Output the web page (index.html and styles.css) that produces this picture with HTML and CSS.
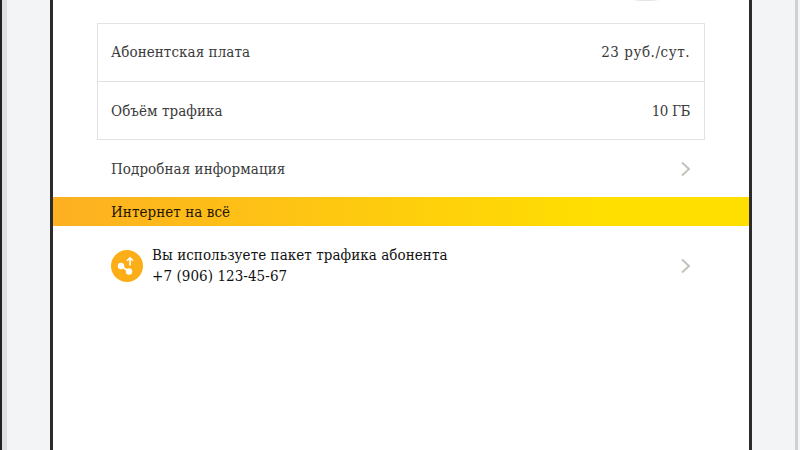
FILE: index.html
```html
<!DOCTYPE html>
<html lang="ru">
<head>
    <meta charset="utf-8">
    <title>Интернет на всё</title>
    <link rel="stylesheet" href="styles.css">
</head>
<body>
<div class="edge edge-left"></div>
<div class="side side-left"></div>
<div class="device">
    <div class="screen">
        <div class="top-arc"></div>
        <div class="params">
            <div class="param-row param-row-first">
                <span>Абонентская плата</span>
                <span class="price">23 руб./сут.</span>
            </div>
            <div class="param-row">
                <span>Объём трафика</span>
                <span class="volume">10 ГБ</span>
            </div>
        </div>
        <a class="details-row">
            <span>Подробная информация</span>
            <svg class="chevron" viewBox="0 0 12 18"><path d="M3 2.5l7 6.5-7 6.5"/></svg>
        </a>
        <div class="banner">Интернет на всё</div>
        <div class="share-row">
            <div class="share-icon">
                <svg viewBox="0 0 32 32">
                    <circle cx="10" cy="16" r="3.2"/>
                    <circle cx="18" cy="21.5" r="3.2"/>
                    <path class="share-line" d="M10 16L18 21.5"/>
                    <path class="share-arrow" d="M19 15.5V8M16 10.8L19 7.8l3 3"/>
                </svg>
            </div>
            <div class="share-text">
                <div>Вы используете пакет трафика абонента</div>
                <div>+7 (906) 123-45-67</div>
            </div>
            <svg class="chevron" viewBox="0 0 12 18"><path d="M3 2.5l7 6.5-7 6.5"/></svg>
        </div>
    </div>
</div>
<div class="side side-right"></div>
<div class="edge edge-right"></div>
</body>
</html>
```

FILE: styles.css
```css
html {
    box-sizing: border-box;
}

*, *:before, *:after {
    box-sizing: inherit;
}

body {
    margin: 0;
    height: 450px;
    overflow: hidden;
    display: flex;
    background: #f3f4f6;
    font-family: "DejaVu Serif Condensed", "DejaVu Serif", serif;
    color: #3a3a3a;
    font-size: 15px;
    letter-spacing: 0.07px;
}

.edge-left {
    width: 7px;
    border-left: 2px solid #222;
    background: #dfe0e2;
}

.side-left {
    width: 43px;
}

.side-right {
    width: 43px;
}

.edge-right {
    width: 5px;
    border-left: 3px solid #cfd0d2;
    background: #f6f6f6;
}

.device {
    height: 450px;
    width: 702px;
    border-left: 3px solid #2b2b2b;
    border-right: 3px solid #2b2b2b;
    background: #fff;
}

.screen {
    position: relative;
    padding-top: 23px;
}

.top-arc {
    position: absolute;
    top: -7px;
    left: 573px;
    width: 40px;
    height: 8px;
    border-radius: 50%;
    background: #e2e2e2;
}

.params {
    margin: 0 44px;
    border: 1px solid #e3e3e3;
}

.param-row {
    display: flex;
    justify-content: space-between;
    align-items: center;
    height: 57px;
    padding: 0 14px 0 13px;
}

.param-row-first {
    height: 58px;
    padding-bottom: 2px;
    border-bottom: 1px solid #e3e3e3;
}

.price {
    letter-spacing: 0.55px;
}

.volume {
    letter-spacing: -0.4px;
}

.details-row {
    display: flex;
    justify-content: space-between;
    align-items: center;
    height: 57px;
    padding: 0 58px;
}

.chevron {
    width: 12px;
    height: 18px;
    fill: none;
    stroke: #c4c2bc;
    stroke-width: 2;
}

.banner {
    height: 29px;
    padding-left: 58px;
    line-height: 30px;
    color: #1f1600;
    background: linear-gradient(to right, #fdb022, #ffdf00 80%);
}

.share-row {
    display: flex;
    align-items: center;
    padding: 18px 58px;
    color: #111;
}

.share-icon {
    width: 32px;
    height: 32px;
    border-radius: 50%;
    background: #fbae17;
    margin-right: 9px;
}

.share-icon svg {
    display: block;
    fill: #fff;
}

.share-line, .share-arrow {
    fill: none;
    stroke: #fff;
    stroke-width: 1.6;
}

.share-text {
    flex: 1;
    padding-top: 1px;
    line-height: 21px;
}
```
